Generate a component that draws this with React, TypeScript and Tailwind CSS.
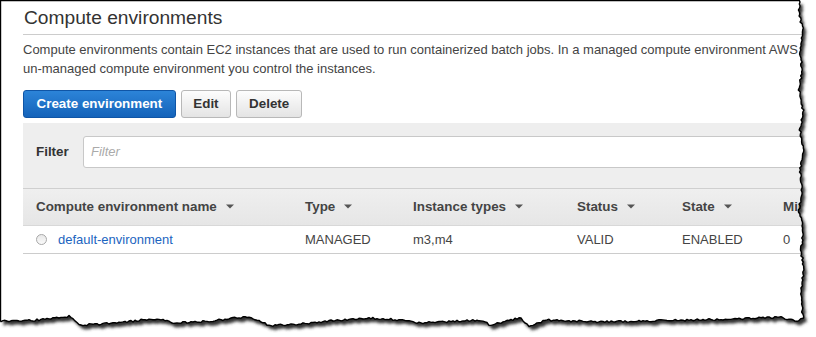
import React from "react";

// torn paper edge, built from a few key points plus a little deterministic noise
const noise = (i: number) => {
  const s = Math.sin(i * 12.9898 + 78.233) * 43758.5453;
  return s - Math.floor(s) - 0.5;
};

const lerpKeys = (keys: [number, number][], t: number) => {
  for (let k = 0; k < keys.length - 1; k++) {
    const [a, av] = keys[k];
    const [b, bv] = keys[k + 1];
    if (t >= a && t <= b) return av + ((t - a) / (b - a)) * (bv - av);
  }
  return keys[keys.length - 1][1];
};

const rightKeys: [number, number][] = [
  [0, 800], [15, 799], [30, 803], [50, 800], [70, 802], [90, 799], [110, 803],
  [130, 800], [150, 804], [170, 800], [190, 802], [210, 799], [230, 803],
  [250, 801], [270, 804], [290, 801], [310, 802], [318, 803],
];

const bottomKeys: [number, number][] = [
  [0, 321], [40, 320], [70, 316], [80, 325], [120, 323], [140, 320], [160, 319],
  [175, 323], [210, 321], [245, 317], [258, 320], [270, 326], [300, 324],
  [330, 321], [370, 318], [400, 320], [420, 323], [480, 320], [490, 325],
  [520, 318], [530, 327], [545, 320], [600, 322], [690, 320], [740, 319],
  [780, 317], [797, 321], [803, 318],
];

function paperPath() {
  const pts: string[] = ["M0.5,0.5"];
  for (let y = 0; y <= 318; y += 2) {
    const x = lerpKeys(rightKeys, y) + noise(y) * 2;
    pts.push(`L${x.toFixed(1)},${y === 0 ? 0.5 : y}`);
  }
  for (let x = 803; x >= 0; x -= 2) {
    const y = lerpKeys(bottomKeys, x) + noise(x + 500) * 2;
    pts.push(`L${x},${y.toFixed(1)}`);
  }
  pts.push("L0.5,321Z");
  return pts.join(" ");
}

const PAPER = paperPath();
const OUTER = "M-5,-5 L821,-5 L821,342 L-5,342 Z ";

function TornEdge() {
  return (
    <svg className="pointer-events-none absolute inset-0" width={816} height={337}>
      <defs>
        <filter id="blur" x="-10%" y="-10%" width="120%" height="120%">
          <feGaussianBlur stdDeviation="1.8" />
        </filter>
        <clipPath id="outside">
          <path d={OUTER + PAPER} clipRule="evenodd" />
        </clipPath>
      </defs>
      <path d={OUTER + PAPER} fill="#fff" fillRule="evenodd" />
      <g clipPath="url(#outside)">
        <path d={PAPER} transform="translate(3,4)" fill="#333" filter="url(#blur)" />
      </g>
      <path d={PAPER} fill="none" stroke="#000" strokeWidth={1.4} strokeLinejoin="round" />
    </svg>
  );
}

function Caret() {
  return (
    <svg width="8" height="5" viewBox="0 0 8 5" className="ml-[9px] inline-block">
      <path d="M0 0.5h8L4 4.5z" fill="#555" />
    </svg>
  );
}

const columns = [
  { label: "Compute environment name", w: "w-[269px]" },
  { label: "Type", w: "w-[108px]" },
  { label: "Instance types", w: "w-[164px]" },
  { label: "Status", w: "w-[105px]" },
  { label: "State", w: "w-[101px]" },
  { label: "Min vCPUs", w: "w-[120px]" },
];

export default function App() {
  return (
    <div
      className="relative h-[337px] w-[816px] overflow-hidden bg-white text-[#444]"
      style={{ fontFamily: '"Liberation Sans", Arial, sans-serif' }}
    >
      <div className="w-[900px] pl-[23px]">
        <h1 className="border-b border-[#ccc] pb-[4px] pl-[1px] pt-[6px] text-[19.2px] leading-[24px] font-normal text-[#333]">
          Compute environments
        </h1>

        <p className="mt-[5px] text-[13px] leading-[19px]">
          Compute environments contain EC2 instances that are used to run containerized batch jobs. In a managed compute environment AWS
          <br />
          un-managed compute environment you control the instances.
        </p>

        <div className="mt-[12px] flex gap-[5px] text-[13.4px] font-bold">
          <button className="h-[28px] rounded-[3px] border border-[#0f55a6] bg-gradient-to-b from-[#2c84d8] to-[#1463ba] px-[12.5px] text-white">
            Create environment
          </button>
          <button className="h-[28px] rounded-[3px] border border-[#b8b8b8] bg-gradient-to-b from-[#fdfdfd] to-[#e4e4e4] px-[11.5px] text-[#333]">
            Edit
          </button>
          <button className="h-[28px] rounded-[3px] border border-[#b8b8b8] bg-gradient-to-b from-[#fdfdfd] to-[#e4e4e4] px-[12px] text-[#333]">
            Delete
          </button>
        </div>

        <div className="mt-[5px] flex h-[66px] items-start border-b border-[#cfcfcf] bg-[#eeeeee] pt-[13px]">
          <div className="flex h-[32px] w-full items-center">
            <span className="w-[60px] pl-[13px] text-[13.4px] font-bold text-[#333]">Filter</span>
            <div className="flex h-[32px] flex-1 items-center rounded-[3px] border border-[#c8c8c8] bg-white pl-[7px] text-[13px] italic text-[#aaa]">
              Filter
            </div>
          </div>
        </div>

        <div className="flex h-[37px] items-center border-b border-[#d8d8d8] bg-gradient-to-b from-[#efefef] to-[#e6e6e6] pl-[13px] text-[13.4px] font-bold text-[#444]">
          {columns.map((c) => (
            <div key={c.label} className={`${c.w} flex shrink-0 items-center whitespace-nowrap`}>
              {c.label}
              <Caret />
            </div>
          ))}
        </div>

        <div className="flex h-[28px] items-center border-b border-[#cccccc] pl-[13px] text-[13px] text-[#444]">
          <div className="flex w-[269px] shrink-0 items-center">
            <span className="h-[11px] w-[11px] rounded-full border border-[#a8a8a8] bg-gradient-to-b from-[#e8e8e8] to-[#fafafa]" />
            <span className="ml-[11px] text-[#1b64c0]">default-environment</span>
          </div>
          <div className="w-[108px] shrink-0">MANAGED</div>
          <div className="w-[164px] shrink-0">m3,m4</div>
          <div className="w-[105px] shrink-0">VALID</div>
          <div className="w-[101px] shrink-0">ENABLED</div>
          <div className="w-[120px] shrink-0">0</div>
        </div>
      </div>

      <TornEdge />
    </div>
  );
}
